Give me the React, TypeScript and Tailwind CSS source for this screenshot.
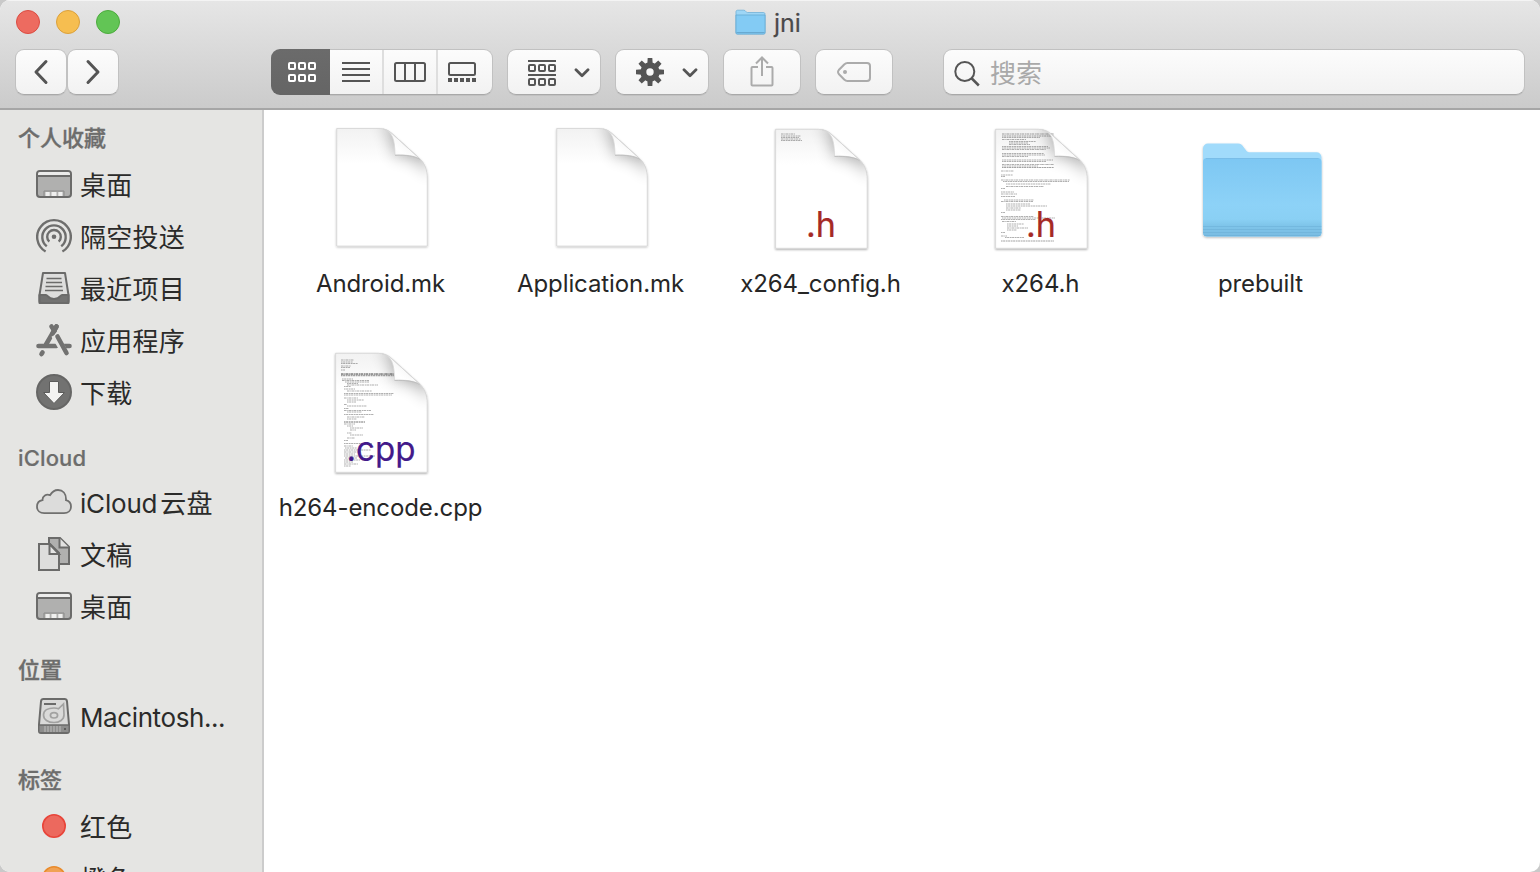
import React from "react";

const G = "#555555";

function DesktopIcon() {
  return (
    <svg width="36" height="36" viewBox="0 0 36 36" fill="none">
      <rect x="1" y="5" width="34" height="26" rx="3" fill="#b0b0af" stroke="#6b6b6a" strokeWidth="2" />
      <path d="M2 9V8a2 2 0 0 1 2-2h28a2 2 0 0 1 2 2v1z" fill="#ececeb" />
      <path d="M1 10h34" stroke="#6b6b6a" strokeWidth="2" />
      <path d="M8 30v-5h20v5" stroke="#8b8b8a" strokeWidth="1" />
      <path d="M9.500 26h4.200v4H9.500zM15.500 26h5v4h-5zM22.300 26h4.200v4h-4.200z" fill="#efefee" />
    </svg>
  );
}

function AirdropIcon() {
  return (
    <svg width="36" height="36" viewBox="0 0 36 36" fill="none" stroke="#6e6e6d" strokeWidth="2.400" strokeLinecap="butt">
      <path d="M9.600 33.500A16.800 16.800 0 1 1 26.400 33.500" />
      <path d="M10.800 28.300A11.700 11.700 0 1 1 25.200 28.300" />
      <path d="M13.300 23.700A6.800 6.800 0 1 1 22.700 23.700" />
      <circle cx="18" cy="18.700" r="2.300" fill="#6e6e6d" stroke="none" />
    </svg>
  );
}

function RecentsIcon() {
  return (
    <svg width="36" height="36" viewBox="0 0 36 36" fill="none">
      <path d="M7 3h22l3.500 22v8H3.500v-8z" fill="#dededd" stroke="#6b6b6a" strokeWidth="2" strokeLinejoin="round" />
      <path d="M3.500 25H10c2 0 1.500 4 8 4s6-4 8-4h6.500v6a2 2 0 0 1-2 2h-25a2 2 0 0 1-2-2z" fill="#737372" stroke="#6b6b6a" strokeWidth="2" strokeLinejoin="round" />
      <path d="M10.500 8.500h15M10 12.500h16M9.500 16.500h17M9 20.500h18" stroke="#6b6b6a" strokeWidth="1.500" />
    </svg>
  );
}

function AppsIcon() {
  return (
    <svg width="36" height="36" viewBox="0 0 36 36" fill="none" stroke="#727271" strokeLinecap="round">
      <path d="M2.500 24H20.500M28.500 24h5" strokeWidth="4.600" />
      <path d="M20.500 4.500L10 22.500M6.500 30.500l-1 1.500" strokeWidth="4.600" />
      <path d="M15.500 4.500L18.500 9" strokeWidth="4.600" />
      <path d="M18.500 13L29 31" stroke="#e5e5e3" strokeWidth="7" strokeLinecap="butt" />
      <path d="M21.500 14.500L30.500 31" strokeWidth="4.600" />
      <path d="M20.500 4.500L16.800 10.800" strokeWidth="4.600" />
    </svg>
  );
}

function DownloadIcon() {
  return (
    <svg width="36" height="36" viewBox="0 0 36 36">
      <circle cx="18" cy="18" r="17" fill="#727271" stroke="#666665" strokeWidth="2" />
      <path d="M13.500 7.500h9v11h6L18 29.500 7.500 18.500h6z" fill="#f3f3f2" stroke="#5c5c5b" strokeWidth="1" />
    </svg>
  );
}

function CloudIcon() {
  return (
    <svg width="36" height="36" viewBox="0 0 36 36">
      <path
        d="M8.200 29.200C4 29.200 1 26.500 1 22.700c0-3.500 2.300-6 5.500-6.500-.2-4.300 4-6.700 7.500-5C16 7.800 18.500 6 22 6c5 0 8 3.800 8 9v1.200c3 .8 5 3 5 6.300 0 4-3 6.700-7 6.700z"
        fill="#dcdcdb" stroke="#70706f" strokeWidth="1.800"
      />
    </svg>
  );
}

function DocsIcon() {
  return (
    <svg width="36" height="36" viewBox="0 0 36 36" fill="none" stroke="#6b6b6a" strokeWidth="2">
      <path d="M13 2h11l9 9v17H13z" fill="#b0b0af" />
      <path d="M23.500 2v9.500H33" fill="#e2e2e1" />
      <path d="M3 8h11l9 9v17H3z" fill="#dddddc" />
      <path d="M13.500 8v10H23z" fill="#e5e5e4" />
    </svg>
  );
}

function DiskIcon() {
  return (
    <svg width="36" height="36" viewBox="0 0 36 36" fill="none">
      <path d="M7.500 1h21c1.500 0 2.300.8 2.500 2.300l2 23.200V33a2 2 0 0 1-2 2H5a2 2 0 0 1-2-2v-6.500L5 3.300C5.200 1.800 6 1 7.500 1z" fill="#dadad9" stroke="#6b6b6a" strokeWidth="2" />
      <path d="M3.500 27h29v7h-29z" fill="#8d8d8c" />
      <path d="M3 27h30" stroke="#6b6b6a" strokeWidth="1.500" />
      <path d="M9 28v6M12 28v6M15 28v6M18 28v6M21 28v6M24 28v6" stroke="#b2b2b1" strokeWidth="1.300" />
      <circle cx="29" cy="31" r="1" fill="#4c4c4b" />
      <path d="M8 6h12" stroke="#6b6b6a" strokeWidth="2" />
      <path d="M27.500 6l.5 11c0 4.500-4.500 7.500-10 7.500-6 0-10.500-3-10.500-7.500S12 10 18 10c1.800 0 3.500.3 4.500.8z" stroke="#a2a2a1" strokeWidth="1.700" />
      <ellipse cx="18" cy="17.300" rx="3.600" ry="2.700" stroke="#a2a2a1" strokeWidth="1.700" />
    </svg>
  );
}

function Dot({ fill, stroke }: { fill: string; stroke: string }) {
  return (
    <svg width="36" height="36" viewBox="0 0 36 36">
      <circle cx="18" cy="18" r="11.200" fill={fill} stroke={stroke} strokeWidth="1.600" />
    </svg>
  );
}

function Header({ children, className = "" }: { children: React.ReactNode; className?: string }) {
  return <div className={`flex h-[30px] shrink-0 items-center pl-[18px] text-[22px] font-medium text-[#6d6d6c] ${className}`}>{children}</div>;
}

const cjkHeader = "[-webkit-text-stroke:0.35px_#6d6d6c]";

function Item({ icon, children }: { icon: React.ReactNode; children: React.ReactNode }) {
  return (
    <div className="flex h-[52px] shrink-0 items-center gap-2 pl-9 text-[26px] text-[#2b2b2a]">
      <span className="h-9 w-9 shrink-0">{icon}</span>
      <span className="whitespace-nowrap pt-[2px] tracking-[0.25px]">{children}</span>
    </div>
  );
}

function FolderIcon() {
  return (
    <svg width="128" height="128" viewBox="0 0 128 128">
      <defs>
        <linearGradient id="front" x1="0" y1="0" x2="0" y2="1">
          <stop offset="0" stopColor="#7dc7f3" />
          <stop offset="0.600" stopColor="#8dd2f7" />
          <stop offset="0.780" stopColor="#8ad0f4" />
          <stop offset="0.860" stopColor="#7fc5ea" />
          <stop offset="1" stopColor="#79bce2" />
        </linearGradient>
        <filter id="fsh" x="-5%" y="-5%" width="110%" height="115%">
          <feDropShadow dx="0" dy="1" stdDeviation="1" floodOpacity="0.280" />
        </filter>
      </defs>
      <g transform="translate(1 0)">
        <g filter="url(#fsh)">
          <path d="M5 24.500a5 5 0 0 1 5-5h30c3 0 4 1.500 5.500 3.500l2.500 3.300c1 1.400 2 2 4 2h66.500a5 5 0 0 1 5 5V108.500a4 4 0 0 1-4 4H9a4 4 0 0 1-4-4z" fill="#a1dbfb" />
          <path d="M5 38a4 4 0 0 1 4-4h110.500a4 4 0 0 1 4 4v70.500a4 4 0 0 1-4 4H9a4 4 0 0 1-4-4z" fill="url(#front)" />
        </g>
        <path d="M5 102.500h118.500M5 105.500h118.500M5 108.500h118.500M6 111.500h116.500" stroke="#65a8cf" strokeOpacity="0.400" strokeWidth="1" />
        <path d="M8 34.500h112.500" stroke="#79bde8" strokeWidth="1" />
      </g>
    </svg>
  );
}

type Line = [number, number, number, number?];

const X264: Line[] = [
  [10, 26, 78, 1], [12, 26, 78, 1], [13.500, 26, 64], [15.500, 26, 50], [17.500, 33, 60], [19, 33, 52], [20.500, 33, 54], [22.500, 26, 72], [24, 26, 74], [25.500, 26, 70],
  [29.500, 26, 68], [31, 26, 69], [32.500, 26, 52], [36, 26, 77], [37.500, 26, 70], [40.500, 26, 78], [42, 26, 62], [43.500, 26, 78, 1], [47, 25, 38], [51, 25, 37], [52.500, 25, 29],
  [56, 25, 94], [57.500, 27, 93], [60, 30, 75], [62.500, 30, 68], [64.500, 25, 29], [68, 25, 38], [70, 25, 41], [72.500, 25, 39], [76, 28, 58], [77.500, 25, 57],
  [80, 30, 54], [82, 30, 71], [84, 30, 45], [86, 30, 45], [88.500, 25, 29], [92.500, 25, 58], [94, 26, 79], [95.500, 25, 60], [97.500, 26, 40], [100, 31, 48],
  [102, 31, 42], [104, 31, 52], [106, 31, 41], [108.500, 25, 29], [112, 25, 31], [113.500, 29, 48], [117, 25, 78, 1],
];

const CONFIG: Line[] = [[10, 25, 39], [12, 25, 45], [13.500, 25, 43], [15, 25, 45], [16.500, 25, 46]];

const CPP: Line[] = [
  [12, 25, 38], [14, 25, 37], [15.500, 25, 42], [18, 25, 35], [19.500, 25, 34], [22, 25, 29], [26, 25, 78, 1.800], [27.500, 25, 78, 1.500],
  [31, 26, 37], [32.500, 26, 53], [34, 29, 53], [35.500, 31, 42], [37, 31, 62], [38.500, 28, 35], [41, 28, 39], [43, 31, 56], [45.500, 28, 78], [47, 28, 76],
  [50, 28, 42], [52, 31, 48], [54, 31, 40], [56.500, 28, 31], [58, 31, 51], [60.500, 28, 33], [62.500, 28, 55], [64, 31, 46], [66.500, 28, 58], [69, 31, 49],
  [71, 31, 41], [74, 28, 49, 1.500], [76, 28, 39], [78, 31, 37], [80, 34, 47], [82, 34, 40], [85, 31, 36], [87, 34, 47], [90, 31, 39], [92.500, 28, 32],
  [95.500, 28, 56], [98, 28, 37], [100, 29, 41], [102, 28, 55], [104, 28, 45], [106, 28, 39], [108, 28, 59], [110, 29, 41], [112, 28, 44], [114, 28, 37], [116, 28, 42], [118, 28, 35],
];

function DocIcon({ id, lines, ext, color, textX, textW }: { id: string; lines?: Line[]; ext?: string; color?: string; textX?: number; textW?: number }) {
  const outline = "M19.800 4.500H62c5.500 0 9.500 2 13.500 5.500L102 34c6 5.500 8.200 12 8.200 20v68h-90.400z";
  const place = ext ? "translate(-1.400 0.800) scale(1.012 1.012)" : undefined;
  return (
    <svg width="128" height="128" viewBox="0 0 128 128">
      <defs>
        <clipPath id={`${id}c`}><path d={outline} /></clipPath>
        <linearGradient id={`${id}g`} x1="0" y1="0" x2="0" y2="1">
          <stop offset="0" stopColor="#f2f2f2" />
          <stop offset="0.300" stopColor="#ffffff" />
        </linearGradient>
        <linearGradient id={`${id}f`} x1="0" y1="1" x2="0.600" y2="0.400">
          <stop offset="0" stopColor="#f2f2f2" />
          <stop offset="0.600" stopColor="#ffffff" />
          <stop offset="1" stopColor="#f6f6f6" />
        </linearGradient>
        <filter id={`${id}b`} x="-50%" y="-50%" width="200%" height="200%"><feGaussianBlur stdDeviation="8" /></filter>
        <filter id={`${id}s`} x="-10%" y="-10%" width="120%" height="120%"><feDropShadow dx="0" dy="1" stdDeviation="0.900" floodOpacity={ext ? 0.350 : 0.250} /></filter>
      </defs>
      <g transform={place}>
        <path d={outline} fill="#fff" stroke="#dadada" strokeWidth="0.800" filter={`url(#${id}s)`} />
        <g clipPath={`url(#${id}c)`}>
          <path d={outline} fill={`url(#${id}g)`} />
          <path d="M62 0C74 6 76 18 77 32c13 0 24 2 36 20V0z" fill="#000" opacity="0.300" filter={`url(#${id}b)`} />
        </g>
      </g>
      {lines && (
        <g stroke="#555" fill="none" strokeOpacity="0.550">
          {lines.map(([y, a, b, w], i) => (
            <path key={i} d={`M${a - 1} ${y}H${b - 1}`} strokeWidth={w ?? 0.850} strokeDasharray={i % 3 ? "1.600 .5 2.300 .6" : "2.600 .7 1.200 .4"} />
          ))}
        </g>
      )}
      <g transform={place}>
        <path d="M66 5C75 7 78 15 78 31c11-.4 19 .6 25 4L75.500 10C72.500 7.200 70 5.500 66 5z" fill={`url(#${id}f)`} stroke="#d6d6d6" strokeWidth="0.700" />
        <path d="M78 31.300c11-.4 19 .6 25 4" fill="none" stroke="#b9b9b9" strokeWidth="0.800" />
        <path d={outline} fill="none" stroke="#d6d6d6" strokeWidth="0.700" />
      </g>
      {ext && (
        <text x={textX} y="113" fontSize="35" fill={color} stroke={color} strokeWidth="0.200" textLength={textW} lengthAdjust="spacingAndGlyphs" fontFamily="Inter, sans-serif">{ext}</text>
      )}
    </svg>
  );
}

function File({ icon, name }: { icon: React.ReactNode; name: string }) {
  return (
    <div className="flex h-[224px] w-[220px] flex-col items-center">
      <div className="h-32 w-32">{icon}</div>
      <div className="mt-4 whitespace-nowrap pr-px text-[24px] leading-8 tracking-[-0.1px] text-[#262626]">{name}</div>
    </div>
  );
}

const btn = "flex h-[46px] shrink-0 items-center justify-center rounded-[9px] border border-[#c1c1c1] border-b-[#a9a9a9] bg-gradient-to-b from-[#fcfcfc] to-[#f2f2f2] shadow-[0_1px_0_rgba(0,0,0,0.06)]";

function Chevron() {
  return (
    <svg width="16" height="10" viewBox="0 0 16 10" fill="none" stroke={G} strokeWidth="2.800" strokeLinecap="round" strokeLinejoin="round" className="mt-px"><path d="M2 1.800l6 6 6-6" /></svg>
  );
}

function Squares({ color, y }: { color: string; y: number }) {
  return (
    <g fill="none" stroke={color} strokeWidth="2">
      {[0, 10, 20].map((x) => <rect key={x} x={x + 1} y={y + 1} width="6" height="6" rx="1" />)}
    </g>
  );
}

export default function App() {
  return (
    <div className="h-[872px] w-[1540px] overflow-hidden bg-[#c9c9c9] font-['Inter','Noto_Sans_CJK_SC',sans-serif]">
      <div className="flex h-full flex-col overflow-hidden rounded-[10px] bg-white">
        <header className="h-[110px] shrink-0 border-b-2 border-[#a6a6a6] bg-gradient-to-b from-[#e6e6e6] to-[#cbcbcb] shadow-[inset_0_1px_0_#f4f4f4]">
          <div className="grid h-[49px] grid-cols-3 pl-4">
            <div className="flex gap-4 pt-[10px]">
              <span className="h-6 w-6 rounded-full border border-[#db4c42] bg-[#ed6b60]" />
              <span className="h-6 w-6 rounded-full border border-[#dba03b] bg-[#f6be50]" />
              <span className="h-6 w-6 rounded-full border border-[#4cab3d] bg-[#62c555]" />
            </div>
            <div className="flex justify-center gap-2 pr-[20px] pt-[6px] text-[25px] leading-[34px] text-[#4a4a4a]">
              <svg width="31" height="28" viewBox="0 0 32 28" preserveAspectRatio="none" className="mt-[2px]">
                <path d="M1 4c0-1.200.6-1.800 1.800-1.800h6.400c1.800 0 2 2.300 3.600 2.300h16.400c1.200 0 1.800.6 1.800 1.800V24.500c0 1-.5 1.500-1.500 1.500h-27C1.500 26 1 25.500 1 24.500z" fill="#9dd6f6" stroke="#6fb0d8" strokeWidth="0.800" />
                <path d="M1 7h30v17.500c0 1-.5 1.500-1.500 1.500h-27c-1 0-1.500-.5-1.500-1.500z" fill="#83cbf4" stroke="#65a9d3" strokeWidth="0.800" />
                <path d="M1.500 24.500h29" stroke="#68a9d0" strokeWidth="1" />
              </svg>
              <span className="[-webkit-text-stroke:0.2px_#4a4a4a]">jni</span>
            </div>
          </div>
          <div className="flex pl-[15px]">
            <div className={`${btn} w-[52px]`}>
              <svg width="16" height="26" viewBox="0 0 16 26" fill="none" stroke={G} strokeWidth="3" strokeLinecap="round" strokeLinejoin="round"><path d="M13 2.500L3 13l10 10.500" /></svg>
            </div>
            <div className={`${btn} w-[52px]`}>
              <svg width="16" height="26" viewBox="0 0 16 26" fill="none" stroke={G} strokeWidth="3" strokeLinecap="round" strokeLinejoin="round"><path d="M3 2.500L13 13 3 23.500" /></svg>
            </div>
            <div className="ml-[152px] flex h-[46px] w-[222px] shrink-0">
              <div className="flex w-[59px] shrink-0 items-center justify-center rounded-l-[9px] bg-gradient-to-b from-[#6b6b6b] to-[#656565] pl-[3px]">
                <svg width="28" height="20"><Squares color="#fff" y={0} /><Squares color="#fff" y={12} /></svg>
              </div>
              <div className="flex flex-1 rounded-r-[9px] border border-l-0 border-[#c1c1c1] border-b-[#a9a9a9] bg-gradient-to-b from-[#fcfcfc] to-[#f2f2f2] shadow-[0_1px_0_rgba(0,0,0,0.06)]">
                <div className="flex w-[52px] items-center justify-center">
                  <svg width="28" height="20" stroke={G} strokeWidth="2"><path d="M0 1h28M0 7h28M0 13h28M0 19h28" /></svg>
                </div>
                <div className="flex w-[54px] items-center justify-center border-l-2 border-[#dedede]">
                  <svg width="32" height="20" fill="none" stroke={G} strokeWidth="2"><rect x="1" y="1" width="30" height="18" rx="1.500" /><path d="M11 1v18M21 1v18" /></svg>
                </div>
                <div className="flex flex-1 items-center border-l-2 border-[#dedede] pl-[10px]">
                  <svg width="28" height="20" fill="none" stroke={G} strokeWidth="2"><rect x="1" y="1" width="26" height="12" rx="1.500" /><path d="M0 18h28" strokeWidth="4" strokeDasharray="4 2" /></svg>
                </div>
              </div>
            </div>
            <div className={`${btn} ml-[14px] w-[94px] gap-[18px] pl-[9px]`}>
              <svg width="28" height="26" className="mt-px"><path d="M0 1h28M0 15h28" stroke={G} strokeWidth="2" /><Squares color={G} y={4} /><Squares color={G} y={18} /></svg>
              <Chevron />
            </div>
            <div className={`${btn} ml-[14px] w-[94px] gap-[18px] pl-[9px]`}>
              <svg width="28" height="28" viewBox="-14 -14 28 28">
                <g fill={G}>
                  {[0, 45, 90, 135, 180, 225, 270, 315].map((a) => <path key={a} transform={`rotate(${a})`} d="M-2.700-8l.4-6h4.600l.4 6z" />)}
                </g>
                <circle r="6.700" fill="none" stroke={G} strokeWidth="6" />
              </svg>
              <Chevron />
            </div>
            <div className={`${btn} ml-[14px] w-[78px]`}>
              <svg width="24" height="32" viewBox="0 0 24 32" fill="none" stroke="#ababab" strokeWidth="2" className="-mt-[3px]"><path d="M8 12H2.500a1 1 0 0 0-1 1v16.500a1 1 0 0 0 1 1h19a1 1 0 0 0 1-1V13a1 1 0 0 0-1-1H16M12 21V2.500M6 8.500l6-6 6 6" /></svg>
            </div>
            <div className={`${btn} ml-[14px] w-[78px]`}>
              <svg width="34" height="20" viewBox="0 0 34 20" fill="none" stroke="#ababab" strokeWidth="2"><path d="M10.500 1H30a3 3 0 0 1 3 3v12a3 3 0 0 1-3 3H10.500c-1.500 0-2.300-.5-3.300-1.500L1.800 12c-1-1.300-1-2.700 0-4l5.400-5.500C8.200 1.500 9 1 10.500 1z" /><circle cx="8" cy="10" r="2" fill="#ababab" stroke="none" /></svg>
            </div>
            <div className={`${btn} ml-[50px] w-[582px] !justify-start gap-[10px] pl-[10px] text-[26px] text-[#a9a9a9]`}>
              <svg width="26" height="26" viewBox="0 0 26 26" fill="none" stroke={G} strokeWidth="2" className="mt-[3px]"><circle cx="10.800" cy="10.500" r="9.500" /><path d="M17.300 17l7.500 7.500" strokeWidth="2.500" /></svg>
              <span className="pt-[2px]">搜索</span>
            </div>
          </div>
        </header>
        <div className="flex min-h-0 flex-1">
          <aside className="flex w-[264px] shrink-0 flex-col overflow-hidden border-r-2 border-[#cccccc] bg-[#e5e5e3] pt-[13px]">
            <Header className={`mb-[5px] ${cjkHeader}`}>个人收藏</Header>
            <Item icon={<DesktopIcon />}>桌面</Item>
            <Item icon={<AirdropIcon />}>隔空投送</Item>
            <Item icon={<RecentsIcon />}>最近项目</Item>
            <Item icon={<AppsIcon />}>应用程序</Item>
            <Item icon={<DownloadIcon />}>下载</Item>
            <Header className="mb-[3px] mt-[25px] tracking-[0.15px] [-webkit-text-stroke:0.2px_#6d6d6c]">iCloud</Header>
            <Item icon={<CloudIcon />}><span className="mr-[3px] tracking-[-0.2px]">iCloud</span>云盘</Item>
            <Item icon={<DocsIcon />}>文稿</Item>
            <Item icon={<DesktopIcon />}>桌面</Item>
            <Header className={`mb-[5px] mt-[23px] ${cjkHeader}`}>位置</Header>
            <Item icon={<DiskIcon />}><span className="tracking-[-0.4px]">Macintosh...</span></Item>
            <Header className={`mb-[5px] mt-[23px] ${cjkHeader}`}>标签</Header>
            <Item icon={<Dot fill="#ec695e" stroke="#e8453a" />}>红色</Item>
            <Item icon={<Dot fill="#f0a254" stroke="#e98b2c" />}>橙色</Item>
          </aside>
          <main className="flex flex-1 flex-wrap content-start pl-[7px] pr-[100px] pt-[14px]">
            <File icon={<DocIcon id="a" />} name="Android.mk" />
            <File icon={<DocIcon id="b" />} name="Application.mk" />
            <File icon={<DocIcon id="c" lines={CONFIG} ext=".h" color="#a52a25" textX={49} textW={30} />} name="x264_config.h" />
            <File icon={<DocIcon id="d" lines={X264} ext=".h" color="#a52a25" textX={49} textW={30} />} name="x264.h" />
            <File icon={<FolderIcon />} name="prebuilt" />
            <File icon={<DocIcon id="e" lines={CPP} ext=".cpp" color="#431a8a" textX={29.500} textW={69} />} name="h264-encode.cpp" />
          </main>
        </div>
      </div>
    </div>
  );
}
